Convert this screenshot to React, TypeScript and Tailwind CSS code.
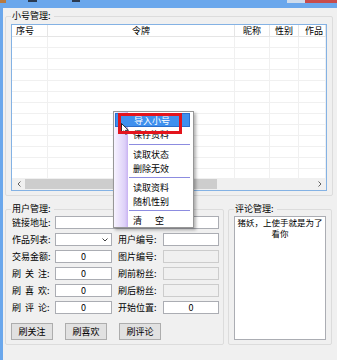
import React from "react";

const font = "font-['Noto_Sans_CJK_SC','Noto_Sans',sans-serif]";

const cols = [
  { w: "w-[36px]", label: "序号", cls: "pl-[4px]" },
  { w: "w-[187px]", label: "令牌", cls: "justify-center" },
  { w: "w-[35px]", label: "昵称", cls: "justify-center" },
  { w: "w-[29px]", label: "性别", cls: "justify-center" },
  { w: "flex-1", label: "作品", cls: "pl-[6px]" },
];

function Box({ value, disabled, className = "" }: { value?: string; disabled?: boolean; className?: string }) {
  return (
    <div
      className={`h-[13px] flex items-center justify-center border text-[9px] leading-none ${
        disabled ? "bg-[#f0f0f0] border-[#cccccc]" : "bg-white border-[#abadb3]"
      } ${className}`}
    >
      {value}
    </div>
  );
}

function Spaced({ a, b, c }: { a: string; b: string; c: string }) {
  return (
    <span>
      <span className="tracking-[4px]">
        {a}
        {b}
      </span>
      {c}:
    </span>
  );
}

const userRows: { left: React.ReactNode; val: string; right: string; rVal?: string; rDis: boolean }[] = [
  { left: "交易金额:", val: "0", right: "图片编号:", rDis: true },
  { left: <Spaced a="刷" b="关" c="注" />, val: "0", right: "刷前粉丝:", rDis: true },
  { left: <Spaced a="刷" b="喜" c="欢" />, val: "0", right: "刷后粉丝:", rDis: true },
  { left: <Spaced a="刷" b="评" c="论" />, val: "0", right: "开始位置:", rVal: "0", rDis: false },
];

const menuItems: (string | null)[] = ["导入小号", "保存资料", null, "读取状态", "删除无效", null, "读取资料", "随机性别", null, "清空"];

function Chevron({ dir }: { dir: "l" | "r" }) {
  return (
    <svg width="4" height="6" viewBox="0 0 4 6" className="block">
      <polyline
        points={dir === "l" ? "3.5,0.5 1,3 3.5,5.5" : "0.5,0.5 3,3 0.5,5.5"}
        fill="none"
        stroke="#606060"
        strokeWidth="1"
      />
    </svg>
  );
}

export default function App() {
  return (
    <div className={`relative w-[337px] h-[360px] overflow-hidden bg-[#f0f0f0] text-black ${font}`}>
      {/* title bar (cropped) */}
      <div className="h-[8px] bg-[#6aa7ec] flex items-start">
        <div className="w-[6px] h-[3px] bg-[#b97a3e]" />
        <div className="ml-[22px] w-[9px] h-[2px] bg-[#2a3a50]" />
        <div className="ml-[35px] w-[8px] h-[2px] bg-[#2a3a50]" />
        <div className="flex-1" />
        <div className="w-[18px] h-[3px] bg-[#cfdcec]" />
        <div className="w-[32px] h-[3px] bg-[#c84c4c]" />
      </div>

      <div className="flex h-[352px]">
        <div className="w-[3px] bg-[#6aa7ec]" />
        <div className="flex-1 flex flex-col">
          {/* 小号管理 */}
          <fieldset className="mt-[2px] ml-[2px] w-[327px] border border-[#dcdcdc] rounded-[2px] px-[5px] pt-[2px] pb-[4px]">
            <legend className="pl-[1px] pr-[3px] text-[9px] leading-[12px]">小号管理:</legend>
            <div className="w-[316px] h-[167px] border border-[#84b2e4] bg-white flex flex-col">
              <div className="h-[12px] flex border-b border-[#e5e5e5]">
                {cols.map((c) => (
                  <div key={c.label} className={`${c.w} ${c.cls} flex items-center border-r border-[#e5e5e5] text-[9px] leading-none`}>
                    {c.label}
                  </div>
                ))}
              </div>
              <div className="flex-1 overflow-hidden">
                {Array.from({ length: 13 }).map((_, i) => (
                  <div key={i} className="h-[11px] flex border-b border-[#f0f0f0]">
                    {cols.map((c) => (
                      <div key={c.label} className={`${c.w} border-r border-[#f0f0f0]`} />
                    ))}
                  </div>
                ))}
              </div>
              <div className="h-[12px] flex items-center bg-[#f0f0f0]">
                <div className="w-[13px] flex justify-center">
                  <Chevron dir="l" />
                </div>
                <div className="w-[192px] h-[10px] bg-[#cdcdcd]" />
                <div className="flex-1" />
                <div className="w-[13px] flex justify-center">
                  <Chevron dir="r" />
                </div>
              </div>
            </div>
          </fieldset>

          <div className="mt-[7px] ml-[2px] flex gap-[4px]">
            {/* 用户管理 */}
            <fieldset className="w-[219px] border border-[#dcdcdc] rounded-[2px] pl-[5px] pr-[4px] pt-[1px] pb-[4px]">
              <legend className="pl-[1px] pr-[3px] text-[9px] leading-[12px]">用户管理:</legend>
              <div className="flex flex-col gap-[4px] text-[9px] leading-none">
                <div className="flex items-center h-[13px]">
                  <div className="w-[44px] pl-[1px] whitespace-nowrap">链接地址:</div>
                  <Box className="w-[164px]" />
                </div>
                <div className="flex items-center h-[13px]">
                  <div className="w-[44px] pl-[1px] whitespace-nowrap">作品列表:</div>
                  <div className="w-[57px] h-[13px] bg-white border border-[#abadb3] flex items-center justify-end pr-[3px]">
                    <svg width="6" height="4" viewBox="0 0 6 4">
                      <polyline points="0.5,0.5 3,3 5.5,0.5" fill="none" stroke="#404040" strokeWidth="1" />
                    </svg>
                  </div>
                  <div className="w-[51px] pl-[6px] whitespace-nowrap">用户编号:</div>
                  <Box className="w-[56px]" />
                </div>
                {userRows.map((r, i) => (
                  <div key={i} className="flex items-center h-[13px]">
                    <div className="w-[44px] pl-[1px] whitespace-nowrap">{r.left}</div>
                    <Box className="w-[57px]" value={r.val} />
                    <div className="w-[51px] pl-[6px] whitespace-nowrap">{r.right}</div>
                    <Box className="w-[56px]" value={r.rVal} disabled={r.rDis} />
                  </div>
                ))}
              </div>
              <div className="mt-[9px] flex gap-[12px]">
                {["刷关注", "刷喜欢", "刷评论"].map((b) => (
                  <div key={b} className="w-[42px] h-[17px] border border-[#adadad] bg-[#e1e1e1] flex items-center justify-center text-[9px] leading-none">
                    {b}
                  </div>
                ))}
              </div>
            </fieldset>

            {/* 评论管理 */}
            <fieldset className="w-[104px] border border-[#dcdcdc] rounded-[2px] px-[5px] pt-[1px] pb-[4px]">
              <legend className="pl-[1px] pr-[3px] text-[9px] leading-[12px]">评论管理:</legend>
              <div className="h-[124px] border border-[#abadb3] bg-white text-center text-[8.5px] leading-[11px]">
                <div className="whitespace-nowrap">猪妖，上使手就是为了</div>
                <div>看你</div>
              </div>
            </fieldset>
          </div>
        </div>
      </div>

      {/* context menu */}
      <div className="absolute left-[113px] top-[111px] w-[81px] border border-[#979797] bg-[linear-gradient(to_right,#f7f3ff_0px,#ddd0f8_11px,#c8b2f2_14px,#ffffff_14px)] shadow-[2px_2px_3px_rgba(0,0,0,0.3)] pt-[1px] text-[9px] leading-none">
        {menuItems.map((m, i) =>
          m === null ? (
            <div key={i} className={`${i === 2 ? "h-[6px]" : "h-[5px]"} flex items-center ml-[15px] mr-[3px]`}>
              <div className="h-px w-full bg-[#8c8ce0]" />
            </div>
          ) : i === 0 ? (
            <div key={i} className="h-[14px] ml-[1px] mr-[3px] flex items-center pl-[18px] bg-[#3f90ee] border border-[#2a6fcc] text-white">
              {m}
            </div>
          ) : (
            <div key={i} className="h-[14px] flex items-center pl-[19px]">
              {m === "清空" ? (
                <span>
                  <span className="tracking-[13px]">清</span>空
                </span>
              ) : (
                m
              )}
            </div>
          )
        )}
      </div>

      {/* cursor */}
      <svg className="absolute left-[121px] top-[123px]" width="8" height="12" viewBox="0 0 8 12">
        <path d="M0.5 0.5 L0.5 10 L3 7.8 L4.6 11.3 L6 10.7 L4.5 7.3 L7.5 7.3 Z" fill="#ffffff" stroke="#000000" strokeWidth="0.8" />
      </svg>

      {/* red highlight box */}
      <div className="absolute left-[118px] top-[113px] w-[64px] h-[21px] border-[3px] border-[#e3141c]" />
    </div>
  );
}
